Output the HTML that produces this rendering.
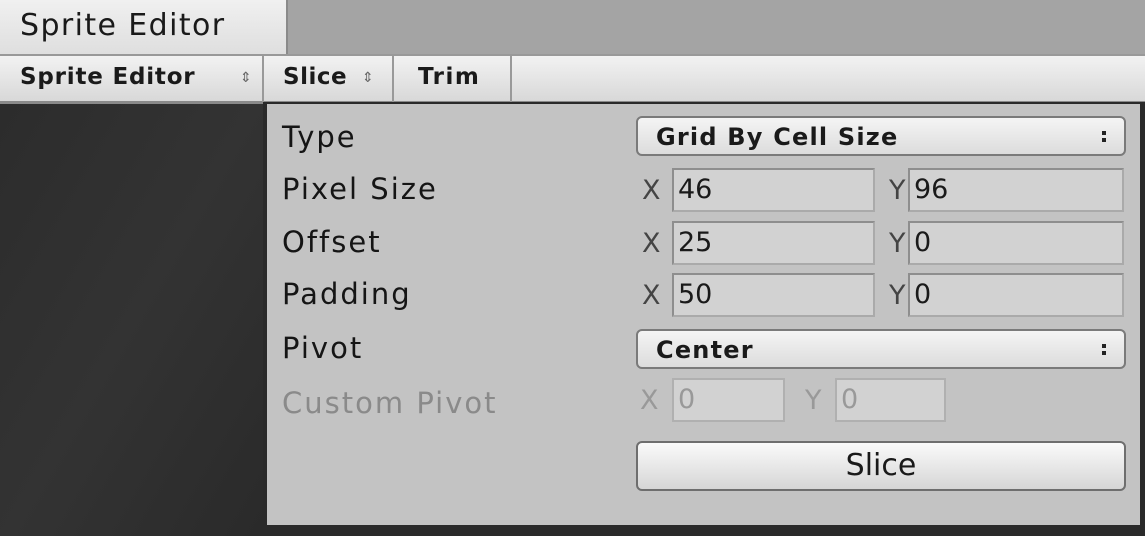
<!DOCTYPE html><html><head><style>
*{margin:0;padding:0;box-sizing:border-box}
body{width:1145px;height:536px;background:#a4a4a4;position:relative;overflow:hidden;font-family:"DejaVu Sans","Liberation Sans",sans-serif;color:#1a1a1a}
.a{position:absolute}
.lbl{position:absolute;left:282px;font-size:29px;letter-spacing:2px;color:#151515;line-height:1}
.dd{position:absolute;left:636px;width:490px;height:40px;border:2px solid #7a7a7a;border-radius:6px;background:linear-gradient(#f4f4f4,#dcdcdc);font-size:24px;font-weight:bold;padding:5px 0 0 18px;letter-spacing:1.2px}
.dd:after{content:"";position:absolute;right:18px;top:13px;width:4px;height:4px;background:#222;box-shadow:0 7px 0 #222}
.f{position:absolute;height:44px;background:#d2d2d2;border:2px solid #8e8e8e;border-bottom-color:#aaa;border-right-color:#aaa;font-size:27px;padding:4px 0 0 4px}
.xl{position:absolute;font-size:27px;color:#444}
.dis{color:#999;border-color:#b0b0b0}
</style></head><body>
<div class="a" style="left:0;top:0;width:288px;height:56px;background:linear-gradient(#f0f0f0,#dedede);border-right:2px solid #8a8a8a;font-size:30px;padding:8px 0 0 20px;letter-spacing:1.4px">Sprite Editor</div>
<div class="a" style="left:0;top:54px;width:1145px;height:50px;background:linear-gradient(#f2f2f2,#d8d8d8);border-top:2px solid #999;border-bottom:3px solid #8a8a8a"></div>
<div class="a" style="left:20px;top:64px;font-size:23px;font-weight:bold;letter-spacing:0.8px">Sprite Editor</div>
<div class="a" style="left:240px;top:70px;font-size:14px;color:#666">⇕</div>
<div class="a" style="left:262px;top:56px;width:2px;height:46px;background:#999"></div>
<div class="a" style="left:283px;top:64px;font-size:23px;font-weight:bold;letter-spacing:0.5px">Slice</div>
<div class="a" style="left:362px;top:70px;font-size:14px;color:#666">⇕</div>
<div class="a" style="left:392px;top:56px;width:2px;height:46px;background:#999"></div>
<div class="a" style="left:418px;top:64px;font-size:23px;font-weight:bold;letter-spacing:1.5px">Trim</div>
<div class="a" style="left:510px;top:56px;width:2px;height:46px;background:#999"></div>
<div class="a" style="left:0;top:104px;width:265px;height:432px;background:linear-gradient(120deg,#2c2c2c,#333 50%,#2a2a2a)"></div>
<div class="a" style="left:263px;top:102px;width:882px;height:434px;background:#2a2a2a"></div>
<div class="a" style="left:267px;top:104px;width:873px;height:421px;background:#c3c3c3"></div>
<div class="lbl" style="top:123px">Type</div>
<div class="lbl" style="top:175px">Pixel Size</div>
<div class="lbl" style="top:228px">Offset</div>
<div class="lbl" style="top:280px">Padding</div>
<div class="lbl" style="top:334px">Pivot</div>
<div class="lbl" style="top:389px;color:#8a8a8a">Custom Pivot</div>
<div class="dd" style="top:116px">Grid By Cell Size</div>
<div class="xl" style="left:642px;top:175px">X</div><div class="f" style="left:672px;top:168px;width:203px">46</div>
<div class="xl" style="left:889px;top:175px">Y</div><div class="f" style="left:908px;top:168px;width:216px">96</div>
<div class="xl" style="left:642px;top:228px">X</div><div class="f" style="left:672px;top:221px;width:203px">25</div>
<div class="xl" style="left:889px;top:228px">Y</div><div class="f" style="left:908px;top:221px;width:216px">0</div>
<div class="xl" style="left:642px;top:280px">X</div><div class="f" style="left:672px;top:273px;width:203px">50</div>
<div class="xl" style="left:889px;top:280px">Y</div><div class="f" style="left:908px;top:273px;width:216px">0</div>
<div class="dd" style="top:329px">Center</div>
<div class="xl" style="left:640px;top:385px;color:#999">X</div><div class="f dis" style="left:672px;top:378px;width:113px">0</div>
<div class="xl" style="left:805px;top:385px;color:#999">Y</div><div class="f dis" style="left:835px;top:378px;width:111px">0</div>
<div class="a" style="left:636px;top:441px;width:490px;height:50px;border:2px solid #6e6e6e;border-radius:6px;background:linear-gradient(#fafafa,#d6d6d6);font-size:30px;text-align:center;padding-top:5px">Slice</div>
</body></html>
